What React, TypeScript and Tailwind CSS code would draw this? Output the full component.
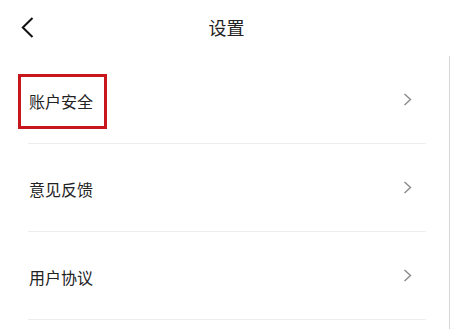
import { Fragment } from 'react';

const items = ['账户安全', '意见反馈', '用户协议'];

function ChevronRight() {
  return (
    <svg width="9" height="13" viewBox="0 0 9 13" fill="none" aria-hidden="true">
      <path d="M1.5 1 L7.5 6.5 L1.5 12" stroke="#8a8a8a" strokeWidth="1.4" />
    </svg>
  );
}

export default function App() {
  return (
    <div
      className="h-[329px] w-[451px] overflow-hidden bg-white text-[#222]"
      style={{ fontFamily: '"Noto Sans CJK SC", "Noto Sans", sans-serif' }}
    >
      {/* Header */}
      <div className="relative flex h-[56px] items-center justify-center pb-[3px]">
        <button className="absolute left-[21px] top-[17px]" aria-label="返回">
          <svg width="13" height="21" viewBox="0 0 13 21" fill="none" aria-hidden="true">
            <path d="M11.5 1 L1.8 10.5 L11.5 20" stroke="#111" strokeWidth="2" />
          </svg>
        </button>
        <h1 className="pl-[2px] text-[18px] leading-none text-[#222]">设置</h1>
      </div>

      {/* List */}
      <div className="h-[273px] w-[450px] border-r border-[#d6d6d6]">
        {items.map((label, i) => (
          <Fragment key={label}>
            <div className="relative ml-[28px] mr-[23px] flex h-[88px] items-center justify-between border-b border-[#eeeeee] pl-[1px] pr-[14px]">
              <span className="pt-[2px] text-[16px] leading-none text-[#222]">{label}</span>
              <ChevronRight />
              {i === 0 && (
                <div className="pointer-events-none absolute left-[-10px] top-[18px] h-[55px] w-[89px] border-[3px] border-[#c8161d]" />
              )}
            </div>
          </Fragment>
        ))}
      </div>
    </div>
  );
}
